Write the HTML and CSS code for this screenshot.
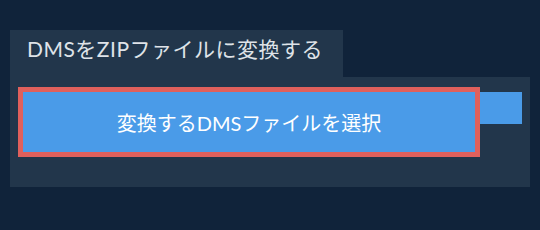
FILE: index.html
```html
<!DOCTYPE html>
<html lang="ja">
<head>
  <meta charset="UTF-8">
  <meta name="viewport" content="width=device-width, initial-scale=1.0">
  <title>DMSをZIPファイルに変換する</title>
  <link rel="stylesheet" href="styles.css">
</head>
<body>
  <div class="converter">
    <div class="tab">DMSをZIPファイルに変換する</div>
    <div class="panel">
      <div class="upload-row">
        <button class="button select-btn">変換するDMSファイルを選択</button>
        <div class="dropdown-btn"></div>
      </div>
    </div>
  </div>
</body>
</html>
```

FILE: styles.css
```css
body {
  margin: 0;
  background: #10233a;
  font-family: Lato, "Noto Sans CJK JP", sans-serif;
}
.converter {
  padding: 30px 10px 0 10px;
  width: 520px;
}
.tab {
  display: inline-block;
  box-sizing: border-box;
  width: 333px;
  height: 47px;
  padding: 0 0 0 17px;
  line-height: 37px;
  background: #22364b;
  color: #dfe3e8;
  font-size: 21px;
  letter-spacing: 0.5px;
}
.panel {
  background: #22364b;
  padding: 10px 8px 30px 8px;
}
.upload-row {
  display: flex;
  align-items: flex-start;
}
.button {
  cursor: pointer;
  font-family: inherit;
  font-size: 20px;
}
.select-btn {
  box-sizing: border-box;
  width: 462px;
  height: 70px;
  border: 5px solid #e0605c;
  background: #4a9be8;
  color: #ffffff;
  padding: 0;
}
.dropdown-btn {
  flex: 1;
  height: 32px;
  margin-top: 5px;
  background: #4a9be8;
}
```
